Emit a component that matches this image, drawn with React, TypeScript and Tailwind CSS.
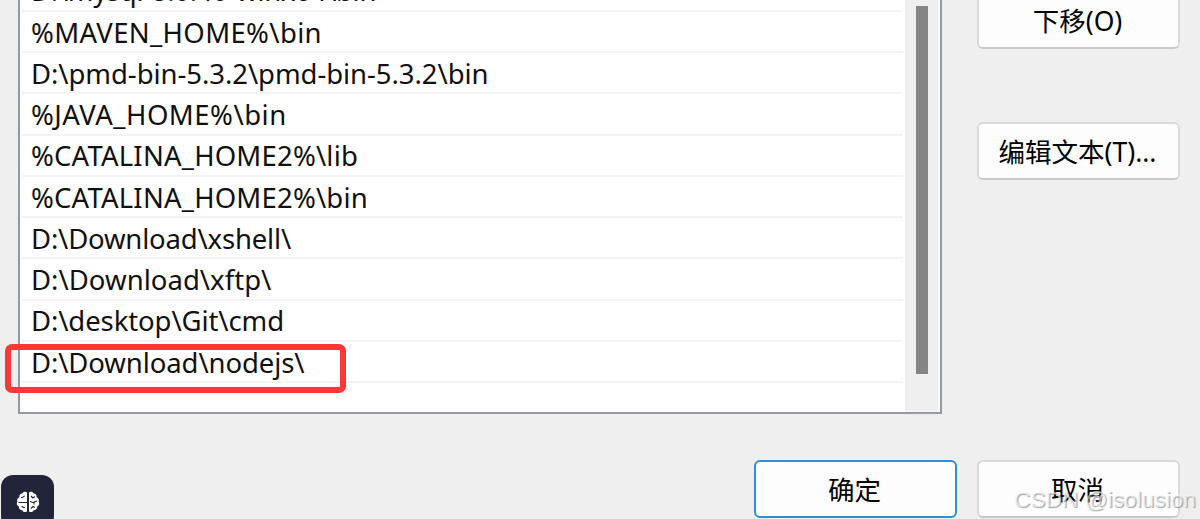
import clsx from 'clsx'

const paths = [
  { value: 'D:\\mysql-8.0.40-winx64\\bin', tracking: 'tracking-[-0.3px]' },
  { value: '%MAVEN_HOME%\\bin', tracking: 'tracking-[0.35px]' },
  { value: 'D:\\pmd-bin-5.3.2\\pmd-bin-5.3.2\\bin', tracking: 'tracking-[-0.06px]' },
  { value: '%JAVA_HOME%\\bin', tracking: 'tracking-[0.5px]' },
  { value: '%CATALINA_HOME2%\\lib', tracking: 'tracking-[0.19px]' },
  { value: '%CATALINA_HOME2%\\bin', tracking: 'tracking-[0.19px]' },
  { value: 'D:\\Download\\xshell\\', tracking: 'tracking-[-0.18px]' },
  { value: 'D:\\Download\\xftp\\', tracking: 'tracking-[0.03px]' },
  { value: 'D:\\desktop\\Git\\cmd', tracking: 'tracking-[-0.1px]' },
  { value: 'D:\\Download\\nodejs\\', tracking: 'tracking-[-0.1px]', marked: true },
]

function DialogButton({ label, primary, className }: { label: string; primary?: boolean; className?: string }) {
  return (
    <button
      className={clsx(
        'flex h-[58px] w-[203px] shrink-0 items-center justify-center rounded-[6px] border-2 bg-[#fdfdfd] pt-[3px] pr-[2px] text-[26.5px] text-black',
        primary ? 'border-[#2b8fdc]' : 'border-[#dadada] border-b-[#cacaca]',
        className
      )}
    >
      {label}
    </button>
  )
}

function BrainIcon() {
  return (
    <svg viewBox="0 0 24 22" className="h-[22px] w-6" fill="none">
      <path
        fill="#fff"
        d="M11 1.6C9.800.2 7 .4 6.300 2.500 4.200 2.600 3 4.400 3.500 6.200 1.500 7 .7 8.900 1.400 10.500.2 12.400.9 14.700 2.900 15.500 2.700 17.800 4.300 19.300 6.200 19.200 7.300 21.500 10 21.600 11 20.200Z"
      />
      <path
        fill="#fff"
        d="M13 1.6C14.200.2 17 .4 17.700 2.500 19.800 2.600 21 4.400 20.500 6.200 22.500 7 23.300 8.900 22.600 10.500 23.800 12.400 23.100 14.700 21.100 15.500 21.300 17.800 19.700 19.300 17.800 19.200 16.700 21.500 14 21.600 13 20.200Z"
      />
      <path
        stroke="#22253a"
        strokeWidth="1.100"
        d="M5 6.500h1.500Q7.500 5 9 5M2.500 11.500H8Q9 11.500 11 11.500M6 15q0 1.500 3 1.500M15 5l2 2 2-1.500M14 10.500l3 1 4-1.500M18 11.500v2M15 17.500l2-2 2 1"
      />
    </svg>
  )
}

export default function App() {
  return (
    <div className="relative flex h-[519px] w-[1200px] flex-col overflow-hidden bg-[#efefef] font-['Noto_Sans','Noto_Sans_CJK_SC',sans-serif]">
      <div className="flex h-[414px] pl-[18px]">
        {/* Path list */}
        <div className="flex w-[924px] border-x-2 border-b-2 border-[#9299a1] bg-white">
          <ul className="-mt-[29.5px] mr-[2px] ml-[2px] w-[881px]">
            {paths.map((path) => (
              <li key={path.value} className="relative flex h-[41.25px] items-center border-b-2 border-[#f3f3f3] pt-[2px] pl-[9px]">
                <span className={clsx('text-[27.5px] leading-none whitespace-pre text-[#111]', path.tracking)}>{path.value}</span>
                {path.marked && (
                  <div className="absolute top-[2.5px] -left-[17px] h-[49px] w-[341px] rounded-[7px] border-6 border-[#fb3838]" />
                )}
              </li>
            ))}
          </ul>
          <div className="flex w-[34px] justify-center border-r border-b border-[#f6f6f6] bg-[#efefef] pt-[6px]">
            <div className="h-[368px] w-3 bg-[#858585]" />
          </div>
        </div>

        {/* Side buttons */}
        <div className="ml-[35px] flex flex-col gap-[73px]">
          <DialogButton label="下移(O)" className="-mt-[9px]" />
          <DialogButton label="编辑文本(T)..." />
        </div>
      </div>

      <div className="mt-[46px] flex gap-5 pl-[754px]">
        <DialogButton label="确定" primary />
        <DialogButton label="取消" />
      </div>

      <div className="absolute top-[475px] left-[1px] flex h-[53px] w-[53px] items-center justify-center rounded-[12px] bg-[#22253a]">
        <BrainIcon />
      </div>
      <div className="absolute top-[485px] right-[4px] font-['Liberation_Sans',sans-serif] text-[22.7px] leading-7 whitespace-nowrap text-white/60 [text-shadow:1px_1px_1px_#777a]">
        CSDN @isolusion
      </div>
    </div>
  )
}
